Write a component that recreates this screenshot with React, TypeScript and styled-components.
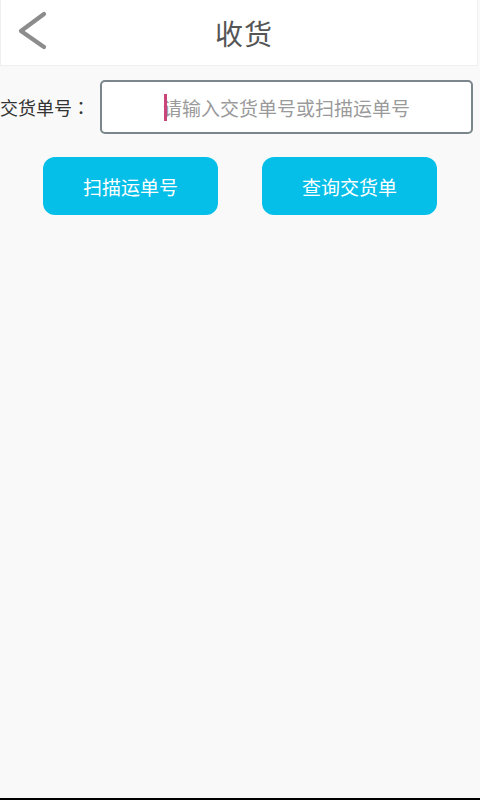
import React, { useState } from 'react';
import styled, { createGlobalStyle } from 'styled-components';

const GlobalStyle = createGlobalStyle`
  html, body {
    margin: 0;
    padding: 0;
    background: #f9f9f9;
    font-family: "Noto Sans CJK SC", "Noto Sans", sans-serif;
  }
`

const Screen = styled.div`
  display: flex;
  flex-direction: column;
  height: 800px;
  background: #f9f9f9;
`

const Header = styled.header`
  position: relative;
  display: flex;
  align-items: center;
  justify-content: center;
  height: 65px;
  margin-right: 2px;
  background: #fff;
  border: 1px solid #efefef;
  border-top: none;
`

const BackButton = styled.button`
  position: absolute;
  left: 12px;
  top: 10px;
  width: 36px;
  height: 42px;
  padding: 0;
  border: none;
  background: transparent;
  display: flex;
  align-items: center;
  justify-content: center;
`

const Title = styled.h1`
  margin: 0 0 0 10px;
  font-size: 28px;
  font-weight: 400;
  color: #555;
  letter-spacing: 1px;
`

const Content = styled.main`
  flex: 1;
  display: flex;
  flex-direction: column;
  padding: 14px 7px 0 0;
`

const FieldRow = styled.div`
  display: flex;
  align-items: center;
  gap: 8px;
`

const Label = styled.label`
  width: 92px;
  font-size: 18px;
  color: #333;
  white-space: nowrap;
`

const Colon = styled.span`
  font-family: "Noto Sans CJK TC", sans-serif;
`

const InputBox = styled.div`
  position: relative;
  flex: 1;
  height: 50px;
  border: 2px solid #7a868b;
  border-radius: 5px;
  background: #fff;
`

const Input = styled.input`
  width: 100%;
  height: 100%;
  box-sizing: border-box;
  border: none;
  outline: none;
  background: transparent;
  text-align: center;
  font-family: inherit;
  font-size: 19px;
  color: #333;
  caret-color: #c8467a;

  &::placeholder {
    color: #9a9a9a;
  }
`

const Caret = styled.span`
  position: absolute;
  left: 62px;
  top: 12px;
  width: 3px;
  height: 27px;
  background: #c8467a;
`

const ButtonRow = styled.div`
  display: flex;
  justify-content: center;
  gap: 44px;
  margin-top: 23px;
  padding-left: 7px;
`

const ActionButton = styled.button`
  width: 175px;
  height: 58px;
  border: none;
  border-radius: 12px;
  background: #06bfe8;
  color: #fff;
  font-family: inherit;
  font-size: 19px;
  cursor: pointer;
`

const BottomEdge = styled.div`
  height: 2px;
  background: #000;
`

const App: React.FC = () => {
  const [value, setValue] = useState('')

  return (
    <>
      <GlobalStyle />
      <Screen>
        <Header>
          <BackButton aria-label="返回">
            <svg width="32" height="40" viewBox="0 0 32 40">
              <polyline
                points="29,3 6,20 29,36"
                fill="none"
                stroke="#8c8c8c"
                strokeWidth="4.2"
                strokeLinecap="round"
                strokeLinejoin="round"
              />
            </svg>
          </BackButton>
          <Title>收货</Title>
        </Header>
        <Content>
          <FieldRow>
            <Label htmlFor="delivery-no">交货单号<Colon>：</Colon></Label>
            <InputBox>
              <Input
                id="delivery-no"
                value={value}
                onChange={(e) => setValue(e.target.value)}
                placeholder="请输入交货单号或扫描运单号"
              />
              {!value && <Caret />}
            </InputBox>
          </FieldRow>
          <ButtonRow>
            <ActionButton>扫描运单号</ActionButton>
            <ActionButton>查询交货单</ActionButton>
          </ButtonRow>
        </Content>
        <BottomEdge />
      </Screen>
    </>
  );
}

export default App
